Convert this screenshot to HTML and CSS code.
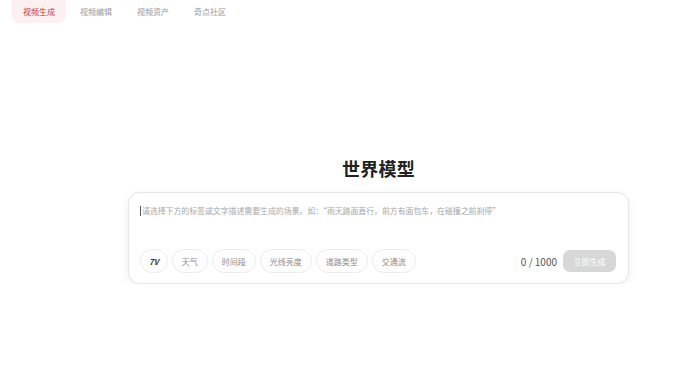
FILE: index.html
```html
<!DOCTYPE html>
<html lang="zh-CN">
<head>
  <meta charset="UTF-8">
  <title>世界模型</title>
  <link rel="stylesheet" href="styles.css">
</head>
<body>

  <nav class="tabs">
    <a class="tab active">视频生成</a>
    <a class="tab">视频编辑</a>
    <a class="tab">视频资产</a>
    <a class="tab">奇点社区</a>
  </nav>

  <main class="main">
    <h1 class="title">世界模型</h1>

    <div class="prompt-card">
      <div class="prompt-input">
        <span class="caret"></span>
        <span class="placeholder">请选择下方的标签或文字描述需要生成的场景。如：“雨天路面直行，前方有面包车，在碰撞之前刹停”</span>
      </div>

      <div class="prompt-footer">
        <div class="chips">
          <button class="chip chip-strong">7V</button>
          <button class="chip">天气</button>
          <button class="chip">时间段</button>
          <button class="chip">光线亮度</button>
          <button class="chip">道路类型</button>
          <button class="chip">交通流</button>
        </div>
        <div class="actions">
          <span class="counter">0 / 1000</span>
          <button class="submit-btn" disabled>立即生成</button>
        </div>
      </div>
    </div>
  </main>

</body>
</html>
```

FILE: styles.css
```css
* {
  box-sizing: border-box;
}

body {
  margin: 0;
  font-family: "Noto Sans CJK SC", "Noto Sans", sans-serif;
  background: #fff;
  color: #222;
}

.tabs {
  display: flex;
  gap: 3px;
  padding-left: 12px;
}

.tab {
  display: block;
  padding: 6px 11px 6px;
  font-size: 8px;
  line-height: 11px;
  color: #999;
  border-radius: 0 0 8px 8px;
  cursor: pointer;
}

.tab.active {
  background: #fdf0f0;
  color: #c43a3a;
}

.main {
  width: 501px;
  margin-left: 128px;
  padding-top: 133px;
}

.title {
  margin: 0 0 12px;
  text-align: center;
  font-size: 18px;
  line-height: 24px;
  font-weight: 700;
  letter-spacing: 0.2px;
  color: #222;
}

.prompt-card {
  border: 1px solid #e6e6e6;
  border-radius: 12px;
  background: #fff;
  box-shadow: 0 2px 8px rgba(0, 0, 0, 0.07);
  padding: 12px 11px 10px 11px;
}

.prompt-input {
  display: flex;
  height: 41px;
  align-items: flex-start;
  padding-top: 1px;
}

.caret {
  width: 1px;
  height: 10px;
  background: #555;
  margin-right: 1px;
}

.placeholder {
  font-size: 8px;
  line-height: 10px;
  letter-spacing: -0.13px;
  color: #a8a8a8;
  white-space: nowrap;
}

.prompt-footer {
  display: flex;
  justify-content: space-between;
  align-items: center;
  margin-top: 3px;
}

.chips {
  display: flex;
  gap: 4px;
}

.chip {
  height: 24px;
  padding: 0 9px;
  border: 1px solid #ececec;
  border-radius: 12px;
  background: #fff;
  font-family: inherit;
  font-size: 8px;
  color: #8c8c8c;
  cursor: pointer;
}

.chip-strong {
  font-weight: 700;
  font-style: italic;
  color: #333;
  padding: 0 8px;
}

.actions {
  display: flex;
  align-items: center;
  gap: 6px;
  padding-right: 1px;
}

.counter {
  font-size: 10px;
  color: #555;
}

.submit-btn {
  width: 53px;
  height: 22px;
  border: none;
  border-radius: 7px;
  background: #d7d7d7;
  color: #fff;
  font-family: inherit;
  font-size: 8px;
}
```
